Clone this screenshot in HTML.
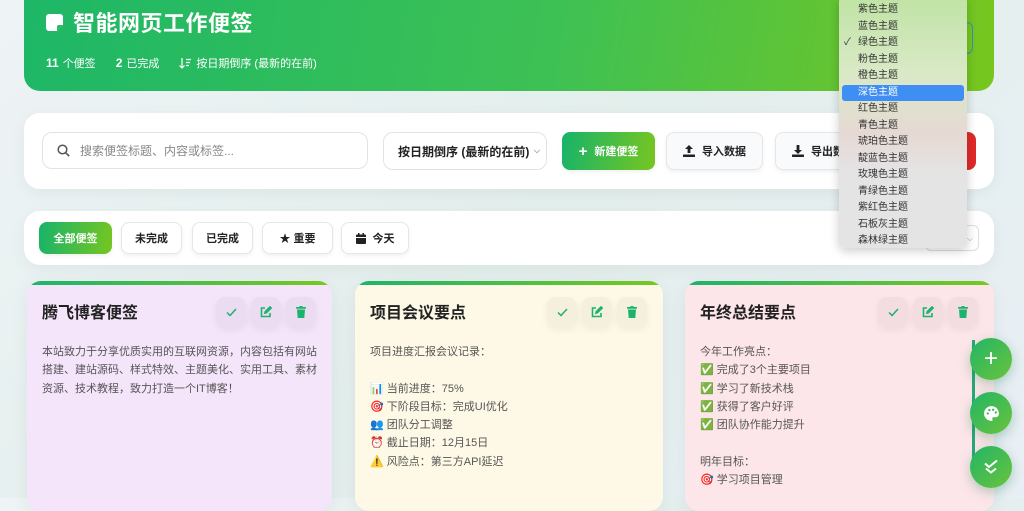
<!DOCTYPE html>
<html><head><meta charset="utf-8"><style>
*{box-sizing:border-box;margin:0;padding:0}
body{width:1024px;height:498px;overflow:hidden;background:linear-gradient(135deg,#eef3f6,#e3efec 50%,#e9eff6);font-family:"Liberation Sans","Noto Sans CJK SC",sans-serif;position:relative;color:#222}
.abs{position:absolute}
.hdr{left:24px;top:-20px;width:970px;height:111px;border-radius:16px;background:linear-gradient(100deg,#1db767,#3ec154 55%,#78c61e);color:#fff}
.hdr h1{position:absolute;left:22px;top:26px;font-size:22px;font-weight:bold;letter-spacing:.5px;display:flex;align-items:center;gap:10px}
.stats{position:absolute;left:22px;top:75px;font-size:11px;display:flex;gap:20px;align-items:center}
.stats b{font-size:12px;margin-right:4px}
.card{background:#fff;border-radius:16px;box-shadow:0 4px 16px rgba(0,0,0,.05)}
.btn{position:absolute;height:32px;border:1px solid #e6e6e6;border-radius:8px;background:#fff;font-size:11px;font-weight:bold;display:flex;align-items:center;justify-content:center;gap:7px;box-shadow:0 2px 5px rgba(0,0,0,.06);color:#222}
.tb{height:38px;background:#f9fafc}
.green{background:linear-gradient(100deg,#16b36a,#78c620);color:#fff;border:none}
.note{top:281px;height:230px;border-radius:14px;overflow:hidden;box-shadow:0 4px 18px rgba(0,0,0,.06)}
.note:before{content:"";position:absolute;left:0;top:0;right:0;height:4px;background:linear-gradient(90deg,#1cb46c,#7ac820)}
.note h3{position:absolute;left:15px;top:18px;font-size:16px;font-weight:bold;color:#222}
.acts{position:absolute;right:16px;top:16px;display:flex;gap:5px}
.acts span{width:30px;height:30px;border-radius:9px;background:rgba(0,0,0,.035);box-shadow:0 3px 8px rgba(0,0,0,.06);display:flex;align-items:center;justify-content:center}
.body{position:absolute;left:15px;top:62px;font-size:11px;line-height:18.3px;color:#555}
.dd{left:839px;top:-4px;width:128px;height:252px;border-radius:6px;background:linear-gradient(180deg,#bfe3a4 0%,#d9e9c6 30%,#e6d9d4 55%,#e4e4e4 70%,#e4e4e4);box-shadow:0 3px 10px rgba(0,0,0,.2);font-size:10px;color:#333}
.dd div{height:16.5px;line-height:16.5px;padding-left:16px;margin:0 3px;border-radius:3px;position:relative}
.dd .sel{background:#3f8ef3;color:#fff}
.fab{left:970px;width:42px;height:42px;border-radius:50%;background:linear-gradient(135deg,#21b568,#6ac33a);color:#fff;display:flex;align-items:center;justify-content:center;box-shadow:0 4px 12px rgba(0,120,60,.3)}
</style></head><body>
<div class="abs hdr">
<h1><svg width="17" height="17" viewBox="0 0 17 17"><path d="M3 0h11a3 3 0 0 1 3 3v8l-6 6H3a3 3 0 0 1-3-3V3a3 3 0 0 1 3-3z" fill="#fff"/><path d="M11 17v-4a2 2 0 0 1 2-2h4" fill="#2cbb5c"/></svg>智能网页工作便签</h1>
<div class="stats"><span><b>11</b>个便签</span><span><b>2</b>已完成</span><span style="display:flex;align-items:center;gap:5px"><svg width="12" height="11" viewBox="0 0 12 11" fill="none" stroke="#fff" stroke-width="1.2"><path d="M3 0v10M0.5 7.5L3 10l2.5-2.5M7 1.5h5M7 4.5h4M7 7.5h3"/></svg>按日期倒序 (最新的在前)</span></div>
</div>
<div class="abs" style="left:945px;top:22px;width:28px;height:32px;border:1.5px solid #3a8fb0;border-radius:6px"></div>

<div class="abs card" style="left:24px;top:113px;width:970px;height:76px"></div>
<div class="abs" style="left:42px;top:132px;width:326px;height:37px;border:1px solid #e3e3e3;border-radius:10px;background:#fff;font-size:12px;color:#888;display:flex;align-items:center;padding-left:14px;gap:10px">
<svg width="13" height="13" viewBox="0 0 13 13"><circle cx="5.5" cy="5.5" r="4.3" fill="none" stroke="#555" stroke-width="1.5"/><path d="M8.7 8.7l3.5 3.5" stroke="#555" stroke-width="1.6"/></svg>搜索便签标题、内容或标签...</div>
<div class="abs" style="left:383px;top:132px;width:164px;height:38px;border:1px solid #e3e3e3;border-radius:10px;background:#fff;font-size:12px;font-weight:bold;display:flex;align-items:center;padding-left:14px">按日期倒序 (最新的在前)<span style="position:absolute;right:6px;font-size:8px;color:#999">⌵</span></div>
<div class="btn green tb" style="left:562px;top:132px;width:93px"><span style="font-size:15px">+</span>新建便签</div>
<div class="btn tb" style="left:666px;top:132px;width:97px"><svg width="12" height="12" viewBox="0 0 12 12" fill="#222"><path d="M6 0L2 4h2.6v4h2.8V4H10z"/><rect x="0" y="9.5" width="12" height="2.5" rx=".5"/></svg>导入数据</div>
<div class="btn tb" style="left:775px;top:132px;width:100px;justify-content:flex-start;padding-left:16px"><svg width="12" height="12" viewBox="0 0 12 12" fill="#222"><path d="M6 9L2 5h2.6V0h2.8v5H10z"/><rect x="0" y="9.5" width="12" height="2.5" rx=".5"/></svg>导出数据</div>
<div class="abs" style="left:940px;top:132px;width:36px;height:38px;border-radius:8px;background:#e02a2a"></div>

<div class="abs card" style="left:24px;top:211px;width:970px;height:54px"></div>
<div class="btn green" style="left:39px;top:222px;width:73px">全部便签</div>
<div class="btn" style="left:121px;top:222px;width:61px">未完成</div>
<div class="btn" style="left:192px;top:222px;width:61px">已完成</div>
<div class="btn" style="left:262px;top:222px;width:71px">★ 重要</div>
<div class="btn" style="left:341px;top:222px;width:68px"><svg width="10" height="11" viewBox="0 0 10 11" fill="#222"><rect x="0" y="1.5" width="10" height="9.5" rx="1"/><rect x="2" y="0" width="1.5" height="3"/><rect x="6.5" y="0" width="1.5" height="3"/><rect x="0" y="4" width="10" height="1" fill="#fff"/></svg> 今天</div>
<div class="abs" style="left:925px;top:225px;width:54px;height:26px;border:1px solid #ddd;border-radius:6px;background:#fff;font-size:8px;color:#999;text-align:right;padding:8px 5px 0 0">⌵</div>

<div class="abs note" style="left:27px;width:305px;background:#f4e5fb"><h3>腾飞博客便签</h3>
<div class="acts"><span><svg width="11" height="9" viewBox="0 0 11 9" fill="none" stroke="#1db36c" stroke-width="1.5"><path d="M1 4.5l3 3L10 1"/></svg></span><span><svg width="12" height="12" viewBox="0 0 12 12" fill="none" stroke="#1db36c" stroke-width="1.6"><path d="M5 2H1.5v8.5H10V7"/><path d="M4.5 7.5L5 5.5l5-5 1.5 1.5-5 5z" fill="#1db36c" stroke-width="1"/></svg></span><span><svg width="10" height="12" viewBox="0 0 10 12" fill="#1db36c"><rect x="0" y="1" width="10" height="1.8" rx=".5"/><rect x="3.5" y="0" width="3" height="1.5"/><path d="M1 3.5h8l-.7 8.5H1.7z"/></svg></span></div>
<div class="body" style="width:280px">本站致力于分享优质实用的互联网资源，内容包括有网站搭建、建站源码、样式特效、主题美化、实用工具、素材资源、技术教程，致力打造一个IT博客！</div></div>
<div class="abs note" style="left:355px;width:308px;background:#fef9e6"><h3>项目会议要点</h3>
<div class="acts"><span><svg width="11" height="9" viewBox="0 0 11 9" fill="none" stroke="#1db36c" stroke-width="1.5"><path d="M1 4.5l3 3L10 1"/></svg></span><span><svg width="12" height="12" viewBox="0 0 12 12" fill="none" stroke="#1db36c" stroke-width="1.6"><path d="M5 2H1.5v8.5H10V7"/><path d="M4.5 7.5L5 5.5l5-5 1.5 1.5-5 5z" fill="#1db36c" stroke-width="1"/></svg></span><span><svg width="10" height="12" viewBox="0 0 10 12" fill="#1db36c"><rect x="0" y="1" width="10" height="1.8" rx=".5"/><rect x="3.5" y="0" width="3" height="1.5"/><path d="M1 3.5h8l-.7 8.5H1.7z"/></svg></span></div>
<div class="body">项目进度汇报会议记录：<br><br>📊 当前进度：75%<br>🎯 下阶段目标：完成UI优化<br>👥 团队分工调整<br>⏰ 截止日期：12月15日<br>⚠️ 风险点：第三方API延迟</div></div>
<div class="abs note" style="left:685px;width:309px;background:#fde6ea"><h3>年终总结要点</h3>
<div class="acts"><span><svg width="11" height="9" viewBox="0 0 11 9" fill="none" stroke="#1db36c" stroke-width="1.5"><path d="M1 4.5l3 3L10 1"/></svg></span><span><svg width="12" height="12" viewBox="0 0 12 12" fill="none" stroke="#1db36c" stroke-width="1.6"><path d="M5 2H1.5v8.5H10V7"/><path d="M4.5 7.5L5 5.5l5-5 1.5 1.5-5 5z" fill="#1db36c" stroke-width="1"/></svg></span><span><svg width="10" height="12" viewBox="0 0 10 12" fill="#1db36c"><rect x="0" y="1" width="10" height="1.8" rx=".5"/><rect x="3.5" y="0" width="3" height="1.5"/><path d="M1 3.5h8l-.7 8.5H1.7z"/></svg></span></div>
<div class="body">今年工作亮点：<br>✅ 完成了3个主要项目<br>✅ 学习了新技术栈<br>✅ 获得了客户好评<br>✅ 团队协作能力提升<br><br>明年目标：<br>🎯 学习项目管理</div></div>

<div class="abs" style="left:972px;top:340px;width:3px;height:130px;background:#2aa77a"></div>
<div class="abs fab" style="top:338px;font-size:24px">+</div>
<div class="abs fab" style="top:392px"><svg width="17" height="17" viewBox="0 0 16 16"><path d="M8 1a7 7 0 0 0 0 14c1.2 0 1.4-1 .9-1.7-.5-.8 0-1.8 1-1.8H12a3 3 0 0 0 3-3C15 4 12 1 8 1z" fill="#fff"/><circle cx="4.5" cy="8" r="1.1" fill="#3cb85a"/><circle cx="6" cy="4.8" r="1.1" fill="#3cb85a"/><circle cx="9.5" cy="4.5" r="1.1" fill="#3cb85a"/><circle cx="12" cy="7" r="1.1" fill="#3cb85a"/></svg></div>
<div class="abs fab" style="top:446px"><svg width="16" height="16" viewBox="0 0 16 16" fill="none" stroke="#fff" stroke-width="2"><path d="M2 4.5l4 3.5 8-6.5M3 9.5l5 4 5-4"/></svg></div>

<div class="abs dd"><div style="height:6px"></div>
<div>紫色主题</div><div>蓝色主题</div><div><span style="position:absolute;left:2px">✓</span>绿色主题</div><div>粉色主题</div><div>橙色主题</div><div class="sel">深色主题</div><div>红色主题</div><div>青色主题</div><div>琥珀色主题</div><div>靛蓝色主题</div><div>玫瑰色主题</div><div>青绿色主题</div><div>紫红色主题</div><div>石板灰主题</div><div>森林绿主题</div></div>
</body></html>
